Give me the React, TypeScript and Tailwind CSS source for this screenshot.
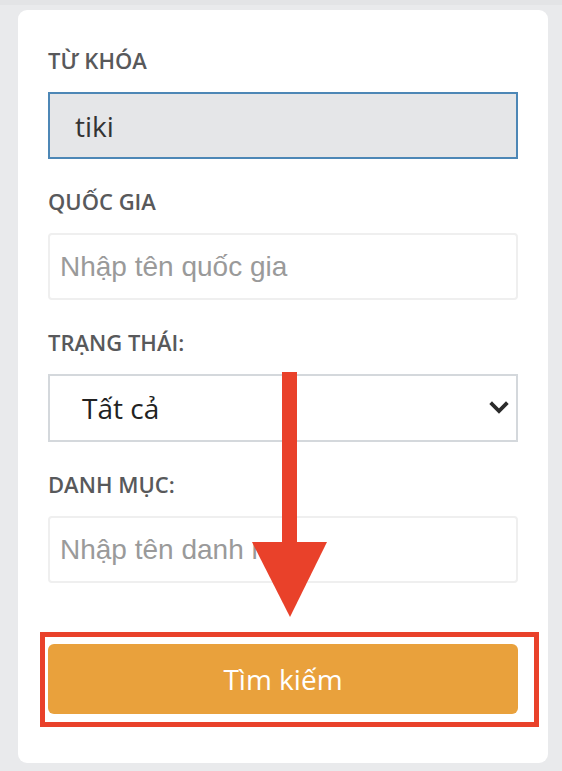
import React from 'react'

const labelCls =
  "block text-[22px] leading-[30px] font-semibold uppercase text-[#58595b] mb-[17px] font-['Open_Sans',sans-serif]"

function Field({ label, children, first }: { label: string; children: React.ReactNode; first?: boolean }) {
  return (
    <div className={first ? '' : 'mt-[27px]'}>
      <label className={labelCls}>{label}</label>
      {children}
    </div>
  )
}

export default function App() {
  return (
    <div className="relative w-[562px] h-[771px] bg-[#e9eaec] overflow-hidden">
      <div className="h-[5px] bg-[#e3e4e6]" />
      <div className="ml-[18px] mt-[5px] w-[530px] bg-white rounded-[9px] px-[30px] pt-[35px] pb-[49px]">
        <Field label="Từ khóa" first>
          <div className="h-[67px] border-2 border-[#4d87b6] bg-[#e5e6e8] flex items-center pl-[25px] text-[28px] text-[#333] font-['Open_Sans',sans-serif]">
            tiki
          </div>
        </Field>

        <Field label="Quốc gia">
          <input
            placeholder="Nhập tên quốc gia"
            className="w-full h-[67px] border-2 border-[#efefef] rounded-[4px] px-[10px] text-[28px] outline-none placeholder:text-[#9a9a9a] font-['Liberation_Sans',Arial,sans-serif]"
          />
        </Field>

        <Field label="Trạng thái:">
          <div className="h-[68px] border-2 border-[#d4d8dc] flex items-center justify-between pl-[32px] pr-[7px] text-[28px] text-[#222] font-['Open_Sans',sans-serif]">
            <span>Tất cả</span>
            <svg width="20" height="14" viewBox="0 0 20 14">
              <polyline points="3,3 10,10 17,3" fill="none" stroke="#2b2b2b" strokeWidth="3.8" strokeLinecap="square" />
            </svg>
          </div>
        </Field>

        <Field label="Danh mục:">
          <input
            placeholder="Nhập tên danh mục"
            className="w-full h-[67px] border-2 border-[#efefef] rounded-[4px] px-[10px] text-[28px] outline-none placeholder:text-[#9a9a9a] font-['Liberation_Sans',Arial,sans-serif]"
          />
        </Field>

        <div className="relative mt-[61px]">
          <button className="w-full h-[70px] bg-[#e9a13c] rounded-[6px] text-white text-[28px] font-['Open_Sans',sans-serif]">
            Tìm kiếm
          </button>
          <div className="absolute left-[-8px] right-[-21px] top-[-12px] bottom-[-13px] border-[5px] border-[#e9412a] pointer-events-none" />
        </div>
      </div>

      {/* annotation arrow */}
      <svg className="absolute left-0 top-0 pointer-events-none" width="562" height="771" viewBox="0 0 562 771">
        <rect x="282" y="372" width="15" height="172" fill="#e9412a" />
        <polygon points="252,542 327,542 290,617" fill="#e9412a" />
      </svg>
    </div>
  )
}
